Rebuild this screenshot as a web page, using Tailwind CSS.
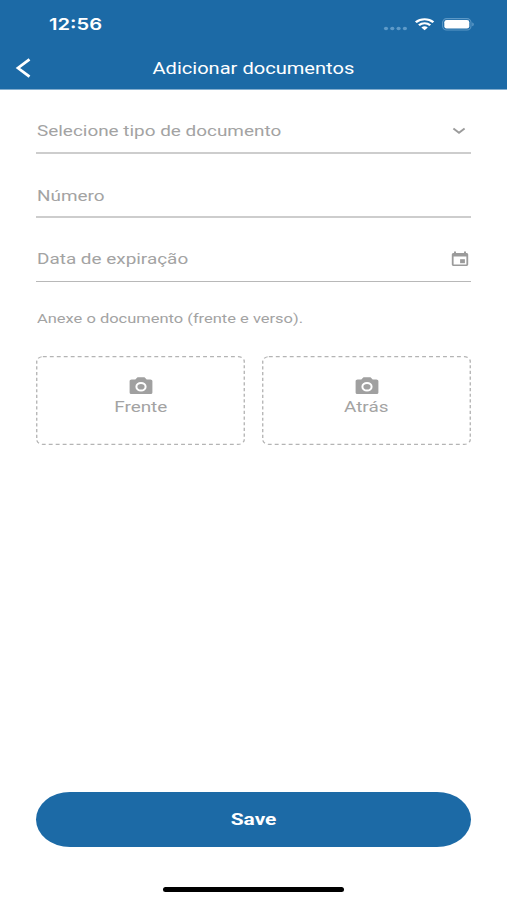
<!DOCTYPE html>
<html lang="pt">
<head>
<meta charset="utf-8">
<meta name="viewport" content="width=device-width, initial-scale=1">
<title>Adicionar documentos</title>
<script src="https://cdn.jsdelivr.net/npm/@tailwindcss/browser@4"></script>
</head>
<body class="bg-white">
<div class="flex h-[900px] w-[507px] flex-col overflow-hidden bg-white font-['Roboto',sans-serif] text-[#a3a3a3]">
  <header class="flex h-[90px] shrink-0 flex-col border-b border-[#84aecf] bg-[#1c6aa6] text-white">
    <div class="flex h-[48px] items-center justify-between pr-[32px] pl-[48.5px]">
      <span class="origin-left scale-x-[1.22] font-['Inter',sans-serif] text-[16.5px] leading-none font-semibold">12:56</span>
      <svg class="h-[20px] w-[92px]" viewBox="0 0 92 20" fill="none">
        <g fill="#5e9ac8"><ellipse cx="3" cy="14.5" rx="2.1" ry="1.7"/><ellipse cx="9.3" cy="14.5" rx="2.1" ry="1.7"/><ellipse cx="15.6" cy="14.5" rx="2.1" ry="1.7"/><ellipse cx="21.9" cy="14.5" rx="2.1" ry="1.7"/></g>
        <g transform="translate(32 4) scale(1.2 1)" stroke="#fff" stroke-width="2.1">
          <path d="M.7 4.2a10.4 10.4 0 0 1 14.6 0M3.3 7.2a6.8 6.8 0 0 1 9.4 0"/>
          <path d="M8 12.2 5.3 9.6a3.9 3.9 0 0 1 5.4 0Z" fill="#fff" stroke="none"/>
        </g>
        <rect x="59.6" y="4.6" width="28.4" height="11.4" rx="4" stroke="#5b97c5" stroke-width="1.1"/>
        <rect x="61.3" y="6" width="25" height="8.6" rx="2.3" fill="#fff"/>
        <path d="M89.2 8.4c2.2.6 2.2 3.2 0 3.8Z" fill="#5b97c5"/>
      </svg>
    </div>
    <div class="grid h-[41px] grid-cols-[50px_1fr_50px] items-center">
      <svg class="mb-px ml-[14.5px] h-[22px] w-[18px]" viewBox="0 0 18 22" fill="none" stroke="#fff" stroke-width="2.8"><path d="M14.5 2.3 3 11l11.5 8.7"/></svg>
      <h1 class="pt-px text-center text-[16.4px] leading-none"><span class="inline-block scale-x-[1.225] whitespace-nowrap">Adicionar documentos</span></h1>
    </div>
  </header>

  <main class="flex flex-1 flex-col px-[36px]">
    <div class="flex h-[64px] items-center justify-between border-b-2 border-[#cdcdcd] pt-[21px]">
      <span class="ml-[.5px] origin-left scale-x-[1.22] text-[15.5px] leading-none">Selecione tipo de documento</span>
      <svg class="mr-[4px] mb-px h-[10px] w-[16px]" viewBox="0 0 16 10" fill="none" stroke="#9b9b9b" stroke-width="1.9"><path d="m2.4 2.4 5.6 4.4 5.6-4.4"/></svg>
    </div>
    <div class="flex h-[64px] items-center border-b-2 border-[#cdcdcd] pt-[23px]">
      <span class="ml-[.5px] origin-left scale-x-[1.22] text-[15.5px] leading-none">Número</span>
    </div>
    <div class="flex h-[64px] items-center justify-between border-b border-[#b8b8b8] pt-[21px]">
      <span class="ml-[.5px] origin-left scale-x-[1.22] text-[15.5px] leading-none">Data de expiração</span>
      <svg class="mr-[2px] mb-[2px] h-[16px] w-[18px]" viewBox="0 0 18 16" fill="#9b9b9b">
        <path fill-rule="evenodd" d="M3 .6h2V2h8V.6h2V2h.4c1 0 1.800.6 1.800 1.500v10c0 .9-.8 1.500-1.800 1.500H2.600C1.600 15 .8 14.400.8 13.500v-10C.8 2.600 1.600 2 2.600 2H3Zm-.4 5v7.900h12.800V5.600Z"/>
        <rect x="9.1" y="8.2" width="4.8" height="4"/>
      </svg>
    </div>
    <p class="mt-[28px] text-[13.5px] leading-[16px]"><span class="ml-[.5px] inline-block origin-left scale-x-[1.22] whitespace-nowrap">Anexe o documento (frente e verso).</span></p>
    <div class="mt-[30px] grid grid-cols-2 gap-[17px]">
      <button class="relative flex h-[89px] flex-col items-center pt-[21px]">
        <svg class="absolute inset-0 size-full" viewBox="0 0 171 89" preserveAspectRatio="none" fill="none"><rect x=".6" y=".6" width="169.8" height="87.8" rx="5" stroke="#b4b4b4" stroke-width="1.1" stroke-dasharray="3.2 2.5"/></svg>
        <svg class="h-[18px] w-[24px]" viewBox="0 0 24 18"><path fill="#a0a0a0" d="M8.500.3h7l2.200 2.100h3.700c1.100 0 2 .8 2 1.700v11.300c0 .9-.9 1.600-2 1.600H2.600c-1.100 0-2-.7-2-1.600V4.100c0-.9.9-1.700 2-1.700h3.700Z"/><ellipse cx="12" cy="9.7" rx="4.6" ry="3.8" fill="#a0a0a0" stroke="#fff" stroke-width="2"/></svg>
        <span class="mt-[5px] scale-x-[1.22] text-[15.5px] leading-none">Frente</span>
      </button>
      <button class="relative flex h-[89px] flex-col items-center pt-[21px]">
        <svg class="absolute inset-0 size-full" viewBox="0 0 171 89" preserveAspectRatio="none" fill="none"><rect x=".6" y=".6" width="169.8" height="87.8" rx="5" stroke="#b4b4b4" stroke-width="1.1" stroke-dasharray="3.2 2.5"/></svg>
        <svg class="h-[18px] w-[24px]" viewBox="0 0 24 18"><path fill="#a0a0a0" d="M8.500.3h7l2.200 2.100h3.700c1.100 0 2 .8 2 1.700v11.300c0 .9-.9 1.600-2 1.600H2.600c-1.100 0-2-.7-2-1.600V4.100c0-.9.9-1.700 2-1.700h3.700Z"/><ellipse cx="12" cy="9.7" rx="4.6" ry="3.8" fill="#a0a0a0" stroke="#fff" stroke-width="2"/></svg>
        <span class="mt-[5px] scale-x-[1.22] text-[15.5px] leading-none">Atrás</span>
      </button>
    </div>
  </main>

  <footer class="flex shrink-0 flex-col items-center px-[36px] pb-[8px]">
    <button class="h-[55px] w-full rounded-[34px/27.5px] bg-[#1c6aa6] pt-px text-white"><span class="inline-block scale-x-[1.23] text-[17px] leading-none font-bold">Save</span></button>
    <div class="mt-[40px] h-[5px] w-[181px] rounded-full bg-black"></div>
  </footer>
</div>
</body>
</html>
